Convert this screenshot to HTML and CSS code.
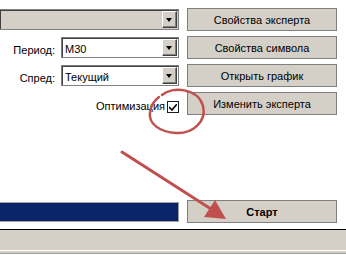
FILE: index.html
```html
<!DOCTYPE html>
<html lang="ru">
<head>
  <meta charset="UTF-8">
  <title>Тестер</title>
  <link rel="stylesheet" href="styles.css">
</head>
<body>
  <div class="tester">
    <div class="settings">
      <div class="row">
        <div class="field">
          <div class="combo combo-wide disabled"><span class="value"></span><span class="drop"></span></div>
        </div>
        <button class="btn">Свойства эксперта</button>
      </div>
      <div class="row">
        <div class="field">
          <label>Период:</label>
          <div class="combo"><span class="value">M30</span><span class="drop"></span></div>
        </div>
        <button class="btn">Свойства символа</button>
      </div>
      <div class="row">
        <div class="field">
          <label>Спред:</label>
          <div class="combo"><span class="value">Текущий</span><span class="drop"></span></div>
        </div>
        <button class="btn">Открыть график</button>
      </div>
      <div class="row">
        <div class="field field-check">
          <label>Оптимизация</label>
          <span class="check">
            <svg width="8" height="7" viewBox="0 0 8 7"><path d="M0 3 L3 6 L8 0" fill="none" stroke="#000" stroke-width="1.6"/></svg>
          </span>
        </div>
        <button class="btn">Изменить эксперта</button>
      </div>
    </div>

    <div class="row run">
      <div class="progress"></div>
      <button class="btn btn-start">Старт</button>
    </div>

    <div class="statusbar"></div>
    <div class="statusbar-edge"></div>
  </div>

  <svg class="marks" width="346" height="255" viewBox="0 0 346 255">
    <path d="M162 95 C172 86, 198 88, 203 106 C207 122, 192 134, 176 133 C160 132, 148 124, 150 112 C151 105, 155 100, 159 97" fill="none" stroke="#c0504d" stroke-width="2.5" stroke-linecap="round"/>
    <line x1="122" y1="152" x2="211" y2="209" stroke="#c0504d" stroke-width="3" stroke-linecap="round"/>
    <polygon points="226,219 204,217 215,200" fill="#c0504d"/>
  </svg>
</body>
</html>
```

FILE: styles.css
```css
body {
  margin: 0;
  background-color: #fff;
  font-family: "Liberation Sans", Arial, sans-serif;
  font-size: 11px;
  color: #000;
  width: 346px;
  height: 255px;
  overflow: hidden;
  position: relative;
}
.settings {
  padding-top: 8px;
  display: flex;
  flex-direction: column;
  gap: 5px;
}
.row {
  display: grid;
  grid-template-columns: 179px 150px;
  column-gap: 8px;
  height: 23px;
  align-items: center;
}
.field {
  display: flex;
  justify-content: flex-end;
  align-items: center;
  gap: 6px;
  height: 100%;
}
.field label {
  padding-top: 4px;
}
.combo {
  box-sizing: border-box;
  width: 118px;
  height: 21px;
  background-color: #fff;
  border: 1px solid #808080;
  box-shadow: inset 1px 1px 0 #404040;
  display: flex;
  align-items: center;
  padding: 1px 1px 1px 3px;
}
.combo-wide {
  width: 100%;
  border-left: none;
}
.combo.disabled {
  background-color: #d4d0c8;
}
.combo .value {
  flex: 1;
  padding-top: 3px;
}
.drop {
  box-sizing: border-box;
  width: 15px;
  height: 17px;
  background-color: #d4d0c8;
  border: 1px solid;
  border-color: #fff #404040 #404040 #fff;
  box-shadow: inset -1px -1px 0 #808080;
  position: relative;
}
.drop::after {
  content: "";
  position: absolute;
  left: 3px;
  top: 6px;
  border-left: 3.5px solid transparent;
  border-right: 3.5px solid transparent;
  border-top: 4px solid #000;
}
.field-check {
  align-items: flex-end;
  gap: 2px;
  padding-bottom: 2px;
  box-sizing: border-box;
}
.field-check label {
  padding: 0 0 1px;
}
.check {
  box-sizing: border-box;
  width: 12px;
  height: 12px;
  border: 1px solid #1c1c1c;
  background-color: #fff;
  display: flex;
  align-items: center;
  justify-content: center;
}
.btn {
  height: 23px;
  margin: 0;
  padding: 0;
  background-color: #d4d0c8;
  border: 1px solid #808080;
  font-family: inherit;
  font-size: 11px;
  color: #000;
}
.run {
  margin-top: 85px;
}
.progress {
  box-sizing: border-box;
  height: 20px;
  background-color: #0a246a;
  border: 1px solid #a0a0a0;
  border-left: none;
}
.btn-start {
  font-weight: bold;
}
.statusbar {
  margin-top: 6px;
  height: 20px;
  background-color: #d4d0c8;
  border-top: 1px solid #000;
  border-bottom: 1px solid #fff;
}
.statusbar-edge {
  height: 2px;
  background-color: #d4d0c8;
  border-bottom: 1px solid #a0a0a0;
}
.marks {
  position: absolute;
  left: 0;
  top: 0;
  pointer-events: none;
}
```
